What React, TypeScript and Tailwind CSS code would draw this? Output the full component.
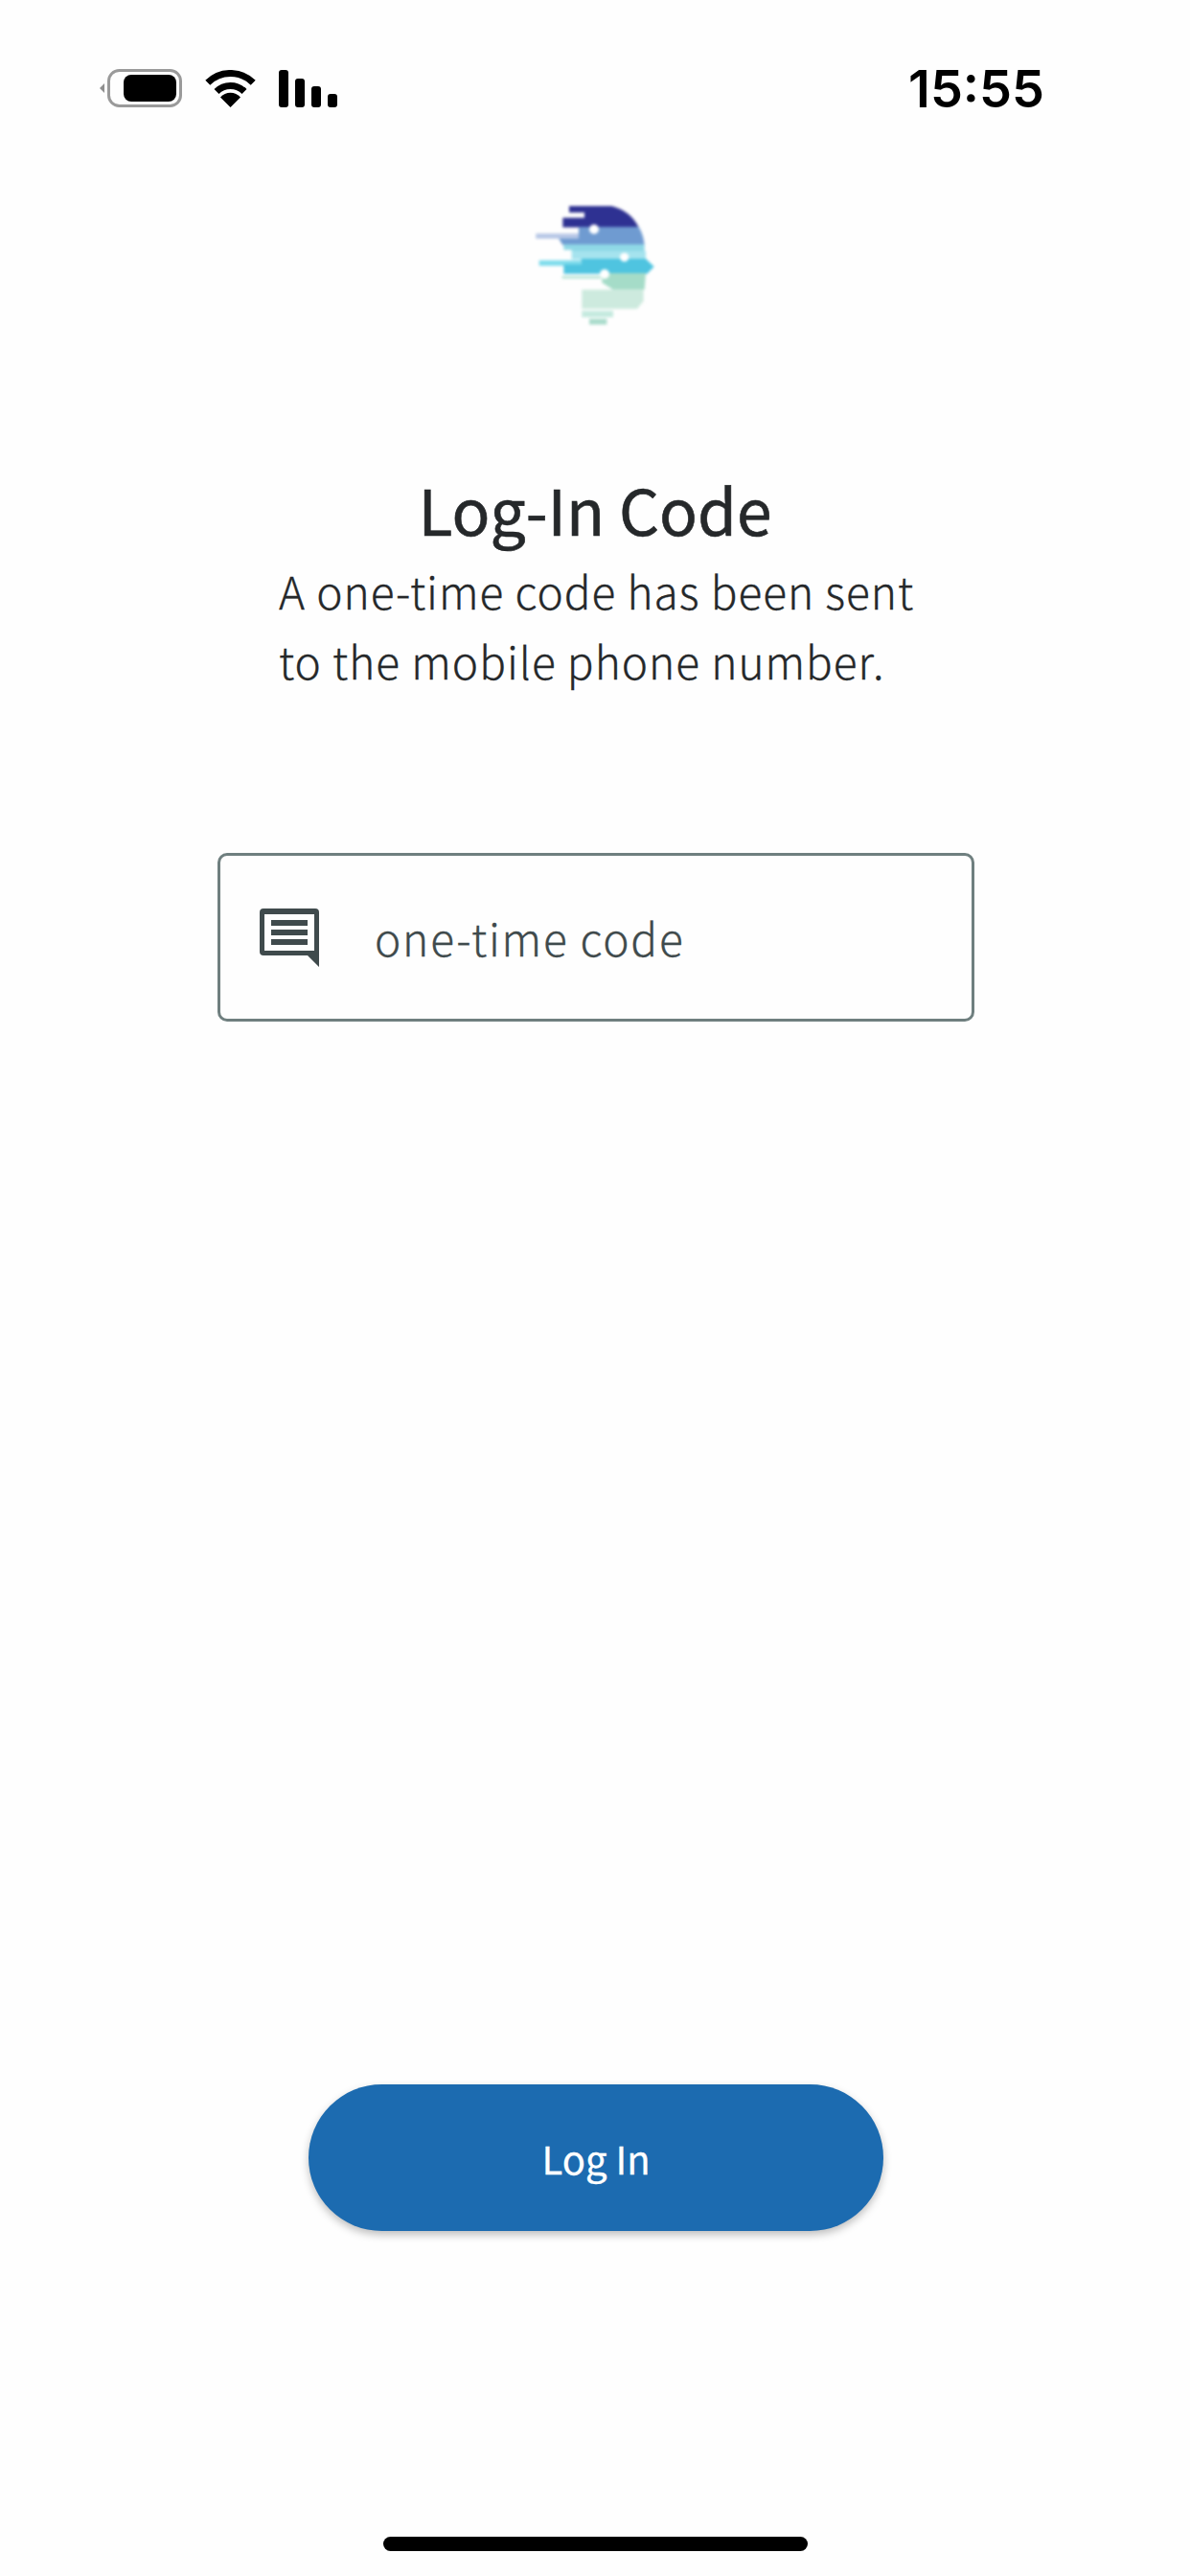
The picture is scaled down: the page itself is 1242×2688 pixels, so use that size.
function StatusIcons() {
  return (
    <div className="flex items-center gap-6">
      <svg width="86" height="40" viewBox="0 0 86 40" fill="none">
        <path d="M5 15 L0 20 L5 25 Z" fill="#8f8f8f" />
        <rect x="9.5" y="1.5" width="75" height="37" rx="11" stroke="#9a9a9a" strokeWidth="3" />
        <rect x="25" y="6" width="55" height="28" rx="8" fill="#000" />
      </svg>
      <svg width="53" height="39" viewBox="0 0 53 39" fill="none">
        <path d="M2.8 13.3 A33.5 33.5 0 0 1 50.2 13.3" stroke="#000" strokeWidth="7" />
        <path d="M12 22.5 A20.5 20.5 0 0 1 41 22.5" stroke="#000" strokeWidth="7" />
        <path d="M26.5 39 L16 28.5 A14 14 0 0 1 37 28.5 Z" fill="#000" />
      </svg>
      <div className="flex h-[39px] items-end gap-[7px]">
        <div className="h-[39px] w-[10px] rounded-[3px] bg-black" />
        <div className="h-[30px] w-[10px] rounded-[3px] bg-black" />
        <div className="h-[22px] w-[10px] rounded-[3px] bg-black" />
        <div className="h-[14px] w-[10px] rounded-[3px] bg-black" />
      </div>
    </div>
  );
}

function Logo() {
  return (
    <svg width="126" height="127" viewBox="84 72 378 381" className="blur-[1.5px]">
      <path d="M192 75 H325 Q385 90 410 142 H172 V112 H240 V95 H192 Z" fill="#2e3192" />
      <path d="M222 140 H410 Q425 165 428 197 H172 L160 178 V172 H222 Z" fill="#6f9bd1" />
      <rect x="88" y="161" width="134" height="16" fill="#b7c7e6" />
      <path d="M175 195 H428 V218 H200 V212 H175 Z" fill="#8fd8e6" />
      <rect x="200" y="216" width="232" height="26" fill="#a5e3ee" />
      <rect x="98" y="245" width="132" height="17" fill="#7fdcec" />
      <path d="M175 258 H230 V240 H432 L458 265 L436 287 H175 Z" fill="#4fc4e0" />
      <path d="M295 285 H432 L428 337 H330 L295 315 Z" fill="#a5dcc8" />
      <rect x="170" y="294" width="125" height="8" fill="#b7e3d4" />
      <path d="M232 337 H425 V372 L405 397 H232 Z" fill="#cdeade" />
      <rect x="232" y="403" width="98" height="20" fill="#c5eadf" />
      <rect x="255" y="428" width="55" height="18" fill="#aadccc" />
      <circle cx="270" cy="148" r="15" fill="#fff" />
      <circle cx="365" cy="235" r="14" fill="#fff" />
      <circle cx="303" cy="288" r="15" fill="#fff" />
    </svg>
  );
}

function MessageIcon() {
  return (
    <svg width="62" height="61" viewBox="0 0 62 61" className="shrink-0">
      <path
        fillRule="evenodd"
        fill="#3f4a4c"
        d="M4 0 H58 Q62 0 62 4 V61 L50 49 H4 Q0 49 0 45 V4 Q0 0 4 0 Z M5 6 V44 H57 V6 Z"
      />
      <rect x="12" y="12" width="38" height="6" fill="#3f4a4c" />
      <rect x="12" y="22" width="38" height="6" fill="#3f4a4c" />
      <rect x="12" y="32" width="38" height="6" fill="#3f4a4c" />
    </svg>
  );
}

export default function App() {
  return (
    <div className="flex h-[2688px] w-[1242px] flex-col items-center overflow-hidden bg-[#fefefe] font-['Noto_Sans_CJK_JP','Noto_Sans',sans-serif]">
      <header className="flex h-[112px] w-full items-center justify-between pl-[104px] pr-[152px] pt-[72px]">
        <StatusIcons />
        <span className="mt-[2px] font-['Inter',sans-serif] text-[54px] font-semibold leading-[38px] text-black">15:55</span>
      </header>

      <div className="mt-[102px]">
        <Logo />
      </div>

      <h1 className="mt-[144px] text-[66px] font-normal leading-[90px] text-[#25282a] [-webkit-text-stroke:0.6px_#25282a]">
        Log-In Code
      </h1>
      <p className="mt-[5px] w-[660px] whitespace-nowrap text-[46px] font-light leading-[73px] tracking-[1px] text-[#25282a] [-webkit-text-stroke:0.3px_#25282a]">
        A one-time code has been sent
        <br />
        to the mobile phone number.
      </p>

      <div className="ml-[2px] mt-[164px] flex h-[176px] w-[790px] items-center gap-[58px] rounded-[10px] border-[3px] border-[#6f7f7f] pl-[41px]">
        <MessageIcon />
        <span className="text-[46px] font-light tracking-[1.8px] text-[#3f4a4c] [-webkit-text-stroke:0.3px_#3f4a4c]">
          one-time code
        </span>
      </div>

      <button className="ml-[2px] mt-auto flex h-[153px] w-[600px] items-center justify-center rounded-full bg-[#1c6bb0] text-[40px] font-normal text-white shadow-[0_4px_8px_rgba(0,0,0,0.25)] [-webkit-text-stroke:0.3px_#ffffff]">
        Log In
      </button>

      <div className="mb-[26px] mt-[319px] h-[15px] w-[443px] rounded-full bg-black" />
    </div>
  );
}
